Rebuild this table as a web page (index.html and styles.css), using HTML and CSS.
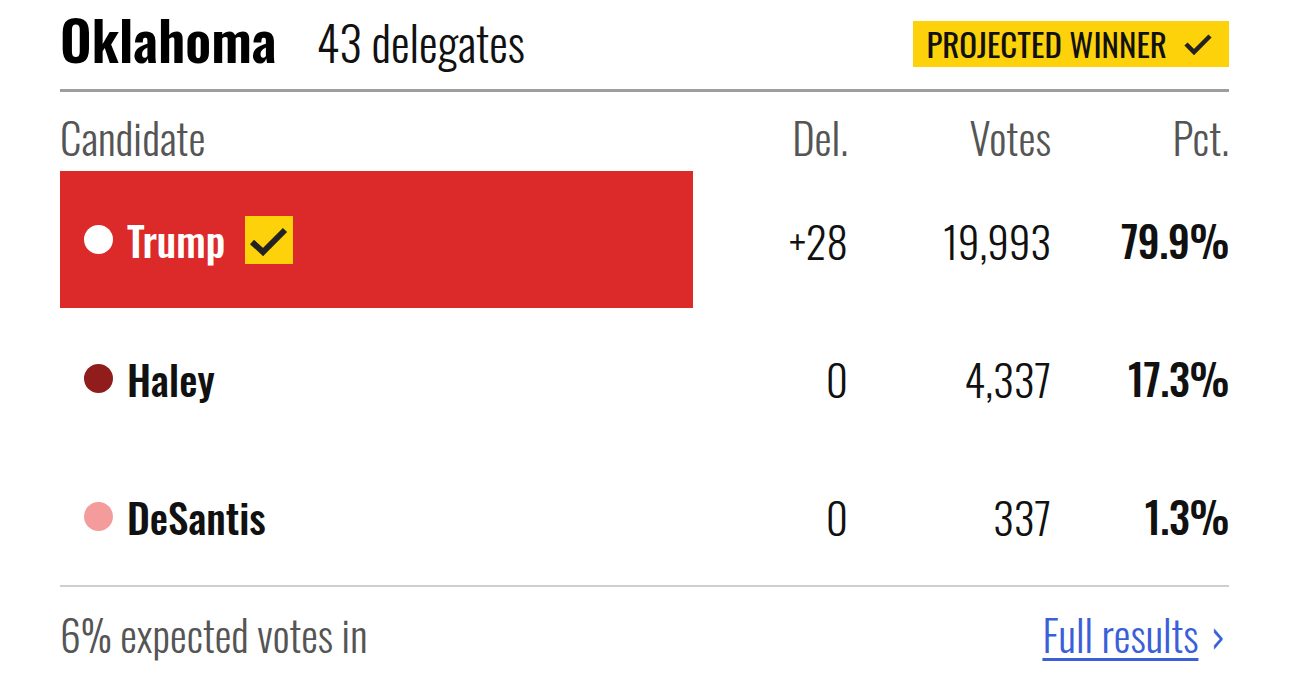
FILE: index.html
```html
<!DOCTYPE html>
<html lang="en">
<head>
<meta charset="utf-8">
<title>Oklahoma results</title>
<link rel="stylesheet" href="styles.css">
</head>
<body>
<div class="card">
  <header class="head">
    <div class="title">
      <h1 class="state">Oklahoma</h1>
      <span class="dels">43 delegates</span>
    </div>
    <div class="badge">
      <span>PROJECTED WINNER</span>
      <svg class="badge-check" viewBox="0 0 30 24" width="30" height="24"><polyline points="3,12 11,20 27,4" fill="none" stroke="#222" stroke-width="4.5"/></svg>
    </div>
  </header>
  <div class="table">
    <div class="th th-cand">Candidate</div>
    <div class="th num">Del.</div>
    <div class="th num">Votes</div>
    <div class="th num">Pct.</div>

    <div class="cell cand winner"><span class="dot dot-trump"></span><span class="name">Trump</span><span class="checkbox"><svg viewBox="0 0 48 48" width="48" height="48"><polyline points="7,26 18,36 40,14" fill="none" stroke="#222" stroke-width="6"/></svg></span></div>
    <div class="cell num">+28</div>
    <div class="cell num">19,993</div>
    <div class="cell num pct">79.9%</div>

    <div class="cell cand"><span class="dot dot-haley"></span><span class="name">Haley</span></div>
    <div class="cell num">0</div>
    <div class="cell num">4,337</div>
    <div class="cell num pct">17.3%</div>

    <div class="cell cand"><span class="dot dot-desantis"></span><span class="name">DeSantis</span></div>
    <div class="cell num">0</div>
    <div class="cell num">337</div>
    <div class="cell num pct">1.3%</div>
  </div>
  <footer class="foot">
    <span class="expected">6% expected votes in</span>
    <a class="full" href="#"><span class="full-text">Full results</span><span class="chev">&#8250;</span></a>
  </footer>
</div>
</body>
</html>
```
FILE: styles.css
```css
html, body {
  margin: 0;
  padding: 0;
  background: #fff;
}
body {
  font-family: "Oswald", "Roboto Condensed", "Liberation Sans Narrow", "Roboto", sans-serif;
  font-stretch: condensed;
  color: #111;
}
.card {
  width: 1169px;
  margin-left: 60px;
}
.head {
  display: flex;
  justify-content: space-between;
  align-items: center;
  height: 89px;
  border-bottom: 3px solid #9e9e9e;
  box-sizing: content-box;
}
.title {
  display: flex;
  align-items: baseline;
  gap: 40px;
  padding-bottom: 10px;
}
.state {
  margin: 0;
  font-size: 55px;
  line-height: 1.3;
  font-weight: 600;
  color: #000;
  white-space: nowrap;
}
.dels {
  font-size: 47px;
  font-weight: 300;
  color: #111;
}
.badge {
  display: flex;
  align-items: center;
  gap: 16px;
  height: 46px;
  padding: 0 16px 0 13px;
  background: #fdd20a;
  font-size: 33px;
  color: #111;
  margin-bottom: 2px;
}
.badge-check {
  display: block;
}
.table {
  display: grid;
  grid-template-columns: 633px 155px 203px 178px;
  grid-auto-rows: 138px;
  grid-template-rows: 79px;
}
.th {
  display: flex;
  align-items: center;
  padding-top: 10px;
  font-size: 43px;
  font-weight: 300;
  color: #555;
}
.th.num {
  justify-content: flex-end;
}
.cell {
  display: flex;
  align-items: center;
  font-size: 43px;
  font-weight: 300;
  color: #111;
}
.cell.num {
  justify-content: flex-end;
}
.cell.pct {
  font-size: 42px;
  font-weight: 500;
  letter-spacing: -0.4px;
}
.cand {
  padding-left: 24px;
  gap: 14px;
  font-size: 41px;
  font-weight: 500;
}
.winner {
  background: #dc2a2a;
  color: #fff;
  height: 137px;
  align-self: start;
}
.dot {
  width: 29px;
  height: 29px;
  border-radius: 50%;
  flex: none;
}
.dot-trump { background: #fff; }
.dot-haley { background: #911c1c; }
.dot-desantis { background: #f49c9c; }
.checkbox {
  display: block;
  width: 48px;
  height: 48px;
  background: #fdd20a;
  margin-left: 6px;
}
.checkbox svg {
  display: block;
}
.foot {
  border-top: 2px solid #cfcfcf;
  display: flex;
  justify-content: space-between;
  align-items: center;
  height: 94px;
}
.expected {
  font-size: 42px;
  font-weight: 300;
  color: #555;
}
.full {
  color: #3a5fd9;
  font-size: 42px;
  font-weight: 300;
  text-decoration: none;
  display: flex;
  align-items: center;
  gap: 12px;
  padding-right: 4px;
}
.full-text {
  text-decoration: underline;
  text-decoration-thickness: 3px;
  text-underline-offset: 5px;
}
.chev {
  font-size: 46px;
}
```
